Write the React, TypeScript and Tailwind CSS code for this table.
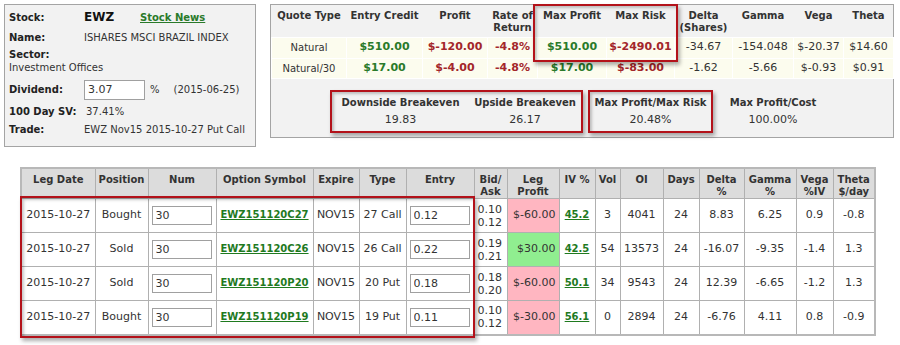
import React from "react";

type Leg = {
  date: string;
  pos: string;
  num: string;
  sym: string;
  exp: string;
  type: string;
  entry: string;
  bid: string;
  ask: string;
  profit: string;
  up: boolean;
  iv: string;
  vol: string;
  oi: string;
  days: string;
  delta: string;
  gamma: string;
  vega: string;
  theta: string;
};

const legs: Leg[] = [
  { date: "2015-10-27", pos: "Bought", num: "30", sym: "EWZ151120C27", exp: "NOV15", type: "27 Call", entry: "0.12", bid: "0.10", ask: "0.12", profit: "$-60.00", up: false, iv: "45.2", vol: "3", oi: "4041", days: "24", delta: "8.83", gamma: "6.25", vega: "0.9", theta: "-0.8" },
  { date: "2015-10-27", pos: "Sold", num: "30", sym: "EWZ151120C26", exp: "NOV15", type: "26 Call", entry: "0.22", bid: "0.19", ask: "0.21", profit: "$30.00", up: true, iv: "42.5", vol: "54", oi: "13573", days: "24", delta: "-16.07", gamma: "-9.35", vega: "-1.4", theta: "1.3" },
  { date: "2015-10-27", pos: "Sold", num: "30", sym: "EWZ151120P20", exp: "NOV15", type: "20 Put", entry: "0.18", bid: "0.18", ask: "0.20", profit: "$-60.00", up: false, iv: "50.1", vol: "34", oi: "9543", days: "24", delta: "12.39", gamma: "-6.65", vega: "-1.2", theta: "1.3" },
  { date: "2015-10-27", pos: "Bought", num: "30", sym: "EWZ151120P19", exp: "NOV15", type: "19 Put", entry: "0.11", bid: "0.10", ask: "0.12", profit: "$-30.00", up: false, iv: "56.1", vol: "0", oi: "2894", days: "24", delta: "-6.76", gamma: "4.11", vega: "0.8", theta: "-0.9" },
];

const quotes = [
  { name: "Natural", credit: "$510.00", profit: "$-120.00", ror: "-4.8%", maxP: "$510.00", maxR: "$-2490.01", delta: "-34.67", gamma: "-154.048", vega: "$-20.37", theta: "$14.60" },
  { name: "Natural/30", credit: "$17.00", profit: "$-4.00", ror: "-4.8%", maxP: "$17.00", maxR: "$-83.00", delta: "-1.62", gamma: "-5.66", vega: "$-0.93", theta: "$0.91" },
];

const quoteCols = [75, 76, 65, 50, 69, 68, 58, 61, 50, 50];
const legCols = [74, 53, 68, 97, 46, 47, 68, 33, 52, 36, 25, 43, 36, 45, 52, 37, 42];

const redBox =
  "border-2 border-[#b3121a] shadow-[inset_2px_2px_3px_rgba(0,0,0,0.22),2px_3px_4px_rgba(0,0,0,0.32)]";

export default function App() {
  const th = "align-top pt-[5px] px-[2px] text-[10px] leading-[12px] font-bold text-[#333]";
  // alignment is added per cell, so no conflicting text-* classes
  const cell = "h-[34px] border border-[#b0b0b0] text-[11px] text-[#333]";
  const td = `${cell} text-center px-[2px]`;

  return (
    <div className="w-[900px] h-[345px] overflow-hidden bg-white text-[#333] font-['DejaVu_Sans',Verdana,sans-serif]">
      <div className="flex items-start pt-[4px] pl-[4px] gap-[14px]">
        {/* stock info */}
        <div className="w-[252px] h-[143px] border border-[#a4a4a4] bg-[#f2f2f2] pl-[4px] pt-[1px] text-[10px]">
          <div className="flex items-center h-[22px]">
            <span className="w-[75px] font-bold text-[#222]">Stock:</span>
            <span className="w-[56px] text-[12px] font-bold text-[#111]">EWZ</span>
            <span className="font-bold text-[#2a7a2a] underline">Stock News</span>
          </div>
          <div className="flex items-center h-[18px]">
            <span className="w-[75px] font-bold text-[#222]">Name:</span>
            <span>ISHARES MSCI BRAZIL INDEX</span>
          </div>
          <div className="mt-[3px] leading-[12.5px]">
            <div className="font-bold text-[#222]">Sector:</div>
            <div>Investment Offices</div>
          </div>
          <div className="mt-[5px] flex items-center h-[21px]">
            <span className="w-[75px] font-bold text-[#222]">Dividend:</span>
            <input
              readOnly
              value="3.07"
              className="w-[61px] h-[20px] border border-[#a0a0a0] bg-white px-[3px] text-[11px] text-[#333] outline-none"
            />
            <span className="ml-[5px]">%</span>
            <span className="ml-[14px]">(2015-06-25)</span>
          </div>
          <div className="mt-[2px] flex items-center h-[19px]">
            <span className="w-[77px] font-bold text-[#222]">100 Day SV:</span>
            <span>37.41%</span>
          </div>
          <div className="flex items-center h-[17px] whitespace-nowrap">
            <span className="w-[75px] font-bold text-[#222]">Trade:</span>
            <span>EWZ Nov15 2015-10-27 Put Call</span>
          </div>
        </div>

        {/* quote summary */}
        <div className="relative w-[624px] h-[134px] border border-[#a4a4a4] bg-[#f2f2f2]">
          <table className="w-[622px] table-fixed border-collapse">
            <colgroup>
              {quoteCols.map((w, i) => (
                <col key={i} style={{ width: w }} />
              ))}
            </colgroup>
            <thead>
              <tr className="h-[32px]">
                <th className={th}>Quote Type</th>
                <th className={th}>Entry Credit</th>
                <th className={th}>Profit</th>
                <th className={th}>Rate of Return</th>
                <th className={th}>Max Profit</th>
                <th className={th}>Max Risk</th>
                <th className={th}>Delta (Shares)</th>
                <th className={th}>Gamma</th>
                <th className={th}>Vega</th>
                <th className={th}>Theta</th>
              </tr>
            </thead>
            <tbody>
              {quotes.map((q, i) => (
                <tr key={q.name} className={`bg-[#fcfcee] ${i === 0 ? "h-[21px]" : "h-[20px]"}`}>
                  <td className="border border-white text-center text-[10px]">{q.name}</td>
                  <td className="border border-white text-center text-[11px] font-bold text-[#2a7a2a]">{q.credit}</td>
                  <td className="border border-white text-center text-[11px] font-bold text-[#a3262a]">{q.profit}</td>
                  <td className="border border-white text-center text-[11px] font-bold text-[#a3262a]">{q.ror}</td>
                  <td className="border border-white text-center text-[11px] font-bold text-[#2a7a2a]">{q.maxP}</td>
                  <td className="border border-white text-center text-[11px] font-bold text-[#a3262a]">{q.maxR}</td>
                  <td className="border border-white text-center text-[11px]">{q.delta}</td>
                  <td className="border border-white text-center text-[11px]">{q.gamma}</td>
                  <td className="border border-white text-center text-[11px]">{q.vega}</td>
                  <td className="border border-white text-center text-[11px]">{q.theta}</td>
                </tr>
              ))}
            </tbody>
          </table>

          {/* highlight over max profit / max risk */}
          <div className={`absolute left-[262px] top-[-1px] w-[145px] h-[58px] ${redBox}`} />

          <div className="ml-[59px] mt-[11px] flex items-start gap-[5px] text-[10px]">
            <div className={`flex w-[253px] h-[43px] pt-[5px] ${redBox}`}>
              <div className="w-[137px] text-center">
                <div className="font-bold leading-[12px]">Downside Breakeven</div>
                <div className="mt-[5px] text-[11px] leading-[12px]">19.83</div>
              </div>
              <div className="w-[112px] text-center">
                <div className="font-bold leading-[12px]">Upside Breakeven</div>
                <div className="mt-[5px] text-[11px] leading-[12px]">26.17</div>
              </div>
            </div>
            <div className={`w-[125px] h-[43px] pt-[5px] text-center ${redBox}`}>
              <div className="font-bold leading-[12px]">Max Profit/Max Risk</div>
              <div className="mt-[5px] text-[11px] leading-[12px]">20.48%</div>
            </div>
            <div className="w-[110px] pt-[7px] text-center">
              <div className="font-bold leading-[12px]">Max Profit/Cost</div>
              <div className="mt-[5px] text-[11px] leading-[12px]">100.00%</div>
            </div>
          </div>
        </div>
      </div>

      {/* legs */}
      <div className="relative ml-[20px] mt-[20px] w-[854px]">
        <table className="w-[854px] table-fixed border-collapse border-2 border-[#b8b8b8]">
          <colgroup>
            {legCols.map((w, i) => (
              <col key={i} style={{ width: w }} />
            ))}
          </colgroup>
          <thead>
            <tr className="bg-[#dcdcdc] h-[28px]">
              {[
                "Leg Date",
                "Position",
                "Num",
                "Option Symbol",
                "Expire",
                "Type",
                "Entry",
                "Bid/ Ask",
                "Leg Profit",
                "IV %",
                "Vol",
                "OI",
                "Days",
                "Delta %",
                "Gamma %",
                "Vega %IV",
                "Theta $/day",
              ].map((h) => (
                <th key={h} className={`${th} text-center border border-[#b0b0b0]`}>
                  {h}
                </th>
              ))}
            </tr>
          </thead>
          <tbody>
            {legs.map((l) => (
              <tr key={l.sym}>
                <td className={`${td} whitespace-nowrap`}>{l.date}</td>
                <td className={td}>{l.pos}</td>
                <td className={`${cell} text-left pl-[3px]`}>
                  <input
                    readOnly
                    value={l.num}
                    className="w-[60px] h-[19px] border border-[#a0a0a0] bg-white px-[3px] text-[11px] text-[#333] outline-none"
                  />
                </td>
                <td className={td}>
                  <span className="text-[10px] font-bold text-[#1f7a1f] underline">{l.sym}</span>
                </td>
                <td className={td}>{l.exp}</td>
                <td className={`${td} whitespace-nowrap`}>{l.type}</td>
                <td className={`${cell} text-left pl-[3px]`}>
                  <input
                    readOnly
                    value={l.entry}
                    className="w-[60px] h-[19px] border border-[#a0a0a0] bg-white px-[3px] text-[11px] text-[#333] outline-none"
                  />
                </td>
                <td className={`${cell} text-left pl-[3px] leading-[13px]`}>
                  <div>{l.bid}</div>
                  <div>{l.ask}</div>
                </td>
                <td className={`${cell} text-right pr-[3px] ${l.up ? "bg-[#90ee90]" : "bg-[#ffb6c1]"}`}>
                  {l.profit}
                </td>
                <td className={td}>
                  <span className="text-[10px] font-bold text-[#1f7a1f] underline">{l.iv}</span>
                </td>
                <td className={td}>{l.vol}</td>
                <td className={td}>{l.oi}</td>
                <td className={td}>{l.days}</td>
                <td className={td}>{l.delta}</td>
                <td className={td}>{l.gamma}</td>
                <td className={td}>{l.vega}</td>
                <td className={td}>{l.theta}</td>
              </tr>
            ))}
          </tbody>
        </table>
        <div className={`absolute left-0 top-[29px] w-[455px] h-[142px] ${redBox}`} />
      </div>
    </div>
  );
}
